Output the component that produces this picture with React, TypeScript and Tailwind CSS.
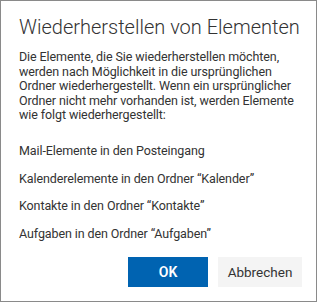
import React from 'react';

const items = [
    'Mail-Elemente in den Posteingang',
    'Kalenderelemente in den Ordner “Kalender”',
    'Kontakte in den Ordner “Kontakte”',
    'Aufgaben in den Ordner “Aufgaben”',
];

export default function App() {
    return (
        <div className="w-[317px] h-[302px] border border-[#8a8a8a] bg-white pl-[18px] pr-[14px] pt-[12px] text-[#333] font-['Roboto',sans-serif]">
            <h1 className="text-[20px] leading-[28px] font-light whitespace-nowrap">Wiederherstellen von Elementen</h1>

            <p className="mt-[9px] text-[12.5px] tracking-[-0.1px] leading-[14.6px] whitespace-nowrap">
                Die Elemente, die Sie wiederherstellen möchten,<br />
                werden nach Möglichkeit in die ursprünglichen<br />
                Ordner wiederhergestellt. Wenn ein ursprünglicher<br />
                Ordner nicht mehr vorhanden ist, werden Elemente<br />
                wie folgt wiederhergestellt:
            </p>

            <div className="mt-[21px] flex flex-col gap-[13px]">
                {items.map((item, i) => (
                    <p key={i} className="text-[12.5px] tracking-[-0.1px] leading-[14.6px] whitespace-nowrap">{item}</p>
                ))}
            </div>

            <div className="mt-[16px] flex justify-end gap-[10px]">
                <button className="w-[80px] h-[30px] bg-[#0063b1] text-white text-[14px] font-semibold">OK</button>
                <button className="w-[84px] h-[30px] bg-[#f4f4f4] text-[#333] text-[13.5px]">Abbrechen</button>
            </div>
        </div>
    );
}
